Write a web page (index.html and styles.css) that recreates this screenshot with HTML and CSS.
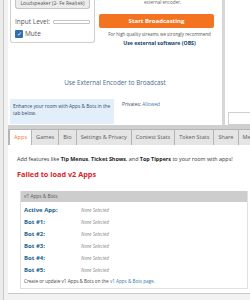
FILE: index.html
```html
<!DOCTYPE html>
<html lang="en">
<head>
    <meta charset="UTF-8">
    <meta name="viewport" content="width=device-width, initial-scale=1.0">
    <title>Broadcast</title>
    <link rel="stylesheet" href="styles.css">
</head>
<body>
    <div class="frame">
        <div class="top">
            <div class="main">
                <div class="controls">
                    <div class="audio-box">
                        <div class="mic-select"><span>Loudspeaker (2- Fe Realtek)</span></div>
                        <div class="level-row">
                            <span>Input Level:</span>
                            <div class="level-bar"></div>
                        </div>
                        <label class="mute-row">
                            <span class="check">&#10003;</span>
                            <span>Mute</span>
                        </label>
                    </div>
                    <div class="broadcast">
                        <div class="cut-note">external encoder.</div>
                        <button class="start-btn">Start Broadcasting</button>
                        <p class="recommend">For high quality streams we strongly recommend</p>
                        <a class="obs-link">Use external software (OBS)</a>
                    </div>
                </div>
                <p class="encoder-link">Use External Encoder to Broadcast</p>
                <div class="info-row">
                    <div class="info-box">Enhance your room with Apps &amp; Bots in the tab below.</div>
                    <div class="privates">Privates: <a>Allowed</a></div>
                </div>
            </div>
            <div class="side">
                <div class="side-input"></div>
            </div>
        </div>

        <div class="tabs-area">
            <ul class="tabs">
                <li class="tab active">Apps</li>
                <li class="tab">Games</li>
                <li class="tab">Bio</li>
                <li class="tab">Settings &amp; Privacy</li>
                <li class="tab">Contest Stats</li>
                <li class="tab">Token Stats</li>
                <li class="tab">Share</li>
                <li class="tab">Members</li>
            </ul>
            <div class="tab-content">
                <p class="features">Add features like <b>Tip Menus</b>, <b>Ticket Shows</b>, and <b>Top Tippers</b> to your room with apps!</p>
                <p class="failed">Failed to load v2 Apps</p>
                <div class="v1-box">
                    <div class="v1-header">v1 Apps &amp; Bots</div>
                    <div class="v1-body">
                        <div class="slot"><span class="slot-name">Active App:</span><span class="slot-value">None Selected</span></div>
                        <div class="slot"><span class="slot-name">Bot #1:</span><span class="slot-value">None Selected</span></div>
                        <div class="slot"><span class="slot-name">Bot #2:</span><span class="slot-value">None Selected</span></div>
                        <div class="slot"><span class="slot-name">Bot #3:</span><span class="slot-value">None Selected</span></div>
                        <div class="slot"><span class="slot-name">Bot #4:</span><span class="slot-value">None Selected</span></div>
                        <div class="slot"><span class="slot-name">Bot #5:</span><span class="slot-value">None Selected</span></div>
                        <p class="v1-note">Create or update v1 Apps &amp; Bots on the <a>v1 Apps &amp; Bots page</a>.</p>
                    </div>
                </div>
            </div>
        </div>
    </div>
</body>
</html>
```

FILE: styles.css
```css
body {
    margin: 0;
    background-color: #ececec;
    font-family: "Open Sans", Arial, sans-serif;
    color: #333;
    overflow: hidden;
}
p {
    margin: 0;
}
a {
    color: #0b5d8a;
}
.frame {
    margin-left: 3px;
    border-left: 1px solid #c8c8c8;
    padding-left: 4px;
    height: 300px;
    background-color: #f2f2f2;
}
.top {
    display: flex;
    height: 125px;
    border-bottom: 4px solid #cfcfcf;
}
.main {
    width: 214px;
    background: #fff;
    border-right: 3px solid #d6d6d6;
}
.controls {
    display: flex;
}
.audio-box {
    margin-left: 2px;
    width: 83px;
    height: 42px;
    border: 1px solid #cfcfcf;
    border-top: none;
    border-radius: 0 0 3px 3px;
    font-size: 6.5px;
    color: #555;
}
.mic-select {
    margin: 0 4px 0 4px;
    height: 8px;
    background: #ececec;
    border: 1px solid #c4c4c4;
    border-top: none;
    border-radius: 0 0 3px 3px;
    overflow: hidden;
    font-size: 5px;
    text-align: center;
    line-height: 5px;
}
.mic-select span {
    display: block;
    margin-top: 1px;
}
.level-row {
    display: flex;
    align-items: center;
    gap: 3px;
    margin: 8px 0 0 4px;
}
.level-bar {
    width: 35px;
    height: 2px;
    border: 1px solid #c4c4c4;
    border-radius: 1px;
}
.mute-row {
    display: flex;
    align-items: center;
    gap: 2px;
    margin: 3px 0 0 4px;
}
.check {
    width: 8px;
    height: 8px;
    background: #2f6fae;
    color: #fff;
    font-size: 6px;
    line-height: 8px;
    text-align: center;
    border-radius: 1px;
}
.broadcast {
    width: 125px;
    text-align: center;
}
.cut-note {
    height: 6px;
    padding-left: 10px;
    font-size: 4.5px;
    color: #666;
    line-height: 5px;
}
.start-btn {
    display: block;
    margin: 8px 0 0 4px;
    width: 115px;
    height: 14px;
    border: none;
    border-radius: 2px;
    background: #f47321;
    color: #fff;
    font-family: "Open Sans", Arial, sans-serif;
    font-weight: bold;
    font-size: 6px;
    padding: 0;
}
.recommend {
    margin: 3px 0 0 4px;
    font-size: 4.5px;
    color: #555;
}
.obs-link {
    display: block;
    margin: 2px 0 0 4px;
    font-size: 5.2px;
    font-weight: bold;
    color: #0e3f6b;
}
.encoder-link {
    margin-top: 31px;
    text-align: center;
    font-size: 6.3px;
    color: #4a6c8c;
}
.info-row {
    display: flex;
    margin-top: 12px;
}
.info-box {
    margin-left: 2px;
    width: 104px;
    height: 25px;
    padding: 4px 3px 0 3px;
    box-sizing: border-box;
    background: #e2eef9;
    font-size: 4.8px;
    line-height: 7px;
    color: #2f4a66;
}
.privates {
    margin: 2px 0 0 8px;
    font-size: 4.8px;
    color: #2f4a66;
}
.privates a {
    color: #3b73a6;
}
.side {
    flex: 1;
    background: #fff;
    display: flex;
    align-items: flex-end;
}
.side-input {
    margin-left: 3px;
    flex: 1;
    height: 11px;
    border: 1px solid #cfcfcf;
    border-right: none;
}
.tabs-area {
    background: #fff;
    height: 164px;
    border-bottom: 1px solid #c8c8c8;
}
.tabs {
    display: flex;
    list-style: none;
    margin: 0;
    padding: 1px 0 0 2px;
    background: #b5b5b5;
    height: 16px;
    box-sizing: border-box;
    overflow: hidden;
}
.tab {
    flex: none;
    padding: 0 4px;
    margin-right: 1px;
    background: #e5e5e5;
    font-size: 5.6px;
    line-height: 15px;
    color: #5a5a5a;
    white-space: nowrap;
}
.tab.active {
    background: #fff;
    color: #f47321;
}
.tab-content {
    padding: 10px 0 0 9px;
}
.features {
    font-size: 5.4px;
    color: #333;
    white-space: nowrap;
}
.features b {
    color: #222;
}
.failed {
    margin-top: 6px;
    font-size: 7.3px;
    font-weight: bold;
    color: #d8242a;
}
.v1-box {
    margin: 12px 0 0 3px;
    width: 226px;
    border: 1px solid #e0e0e0;
    border-top: none;
}
.v1-header {
    height: 11px;
    padding-left: 3px;
    background: #cdcdcd;
    font-size: 4.8px;
    line-height: 11px;
    color: #555;
}
.v1-body {
    padding: 2px 0 4px 3px;
}
.slot {
    display: flex;
    align-items: center;
    height: 12px;
}
.slot-name {
    width: 57px;
    font-size: 6px;
    font-weight: bold;
    color: #1a5f8f;
}
.slot-value {
    font-size: 4.5px;
    font-style: italic;
    color: #888;
}
.v1-note {
    margin-top: 2px;
    font-size: 4.6px;
    color: #444;
}
.v1-note a {
    color: #3b73a6;
}
```
